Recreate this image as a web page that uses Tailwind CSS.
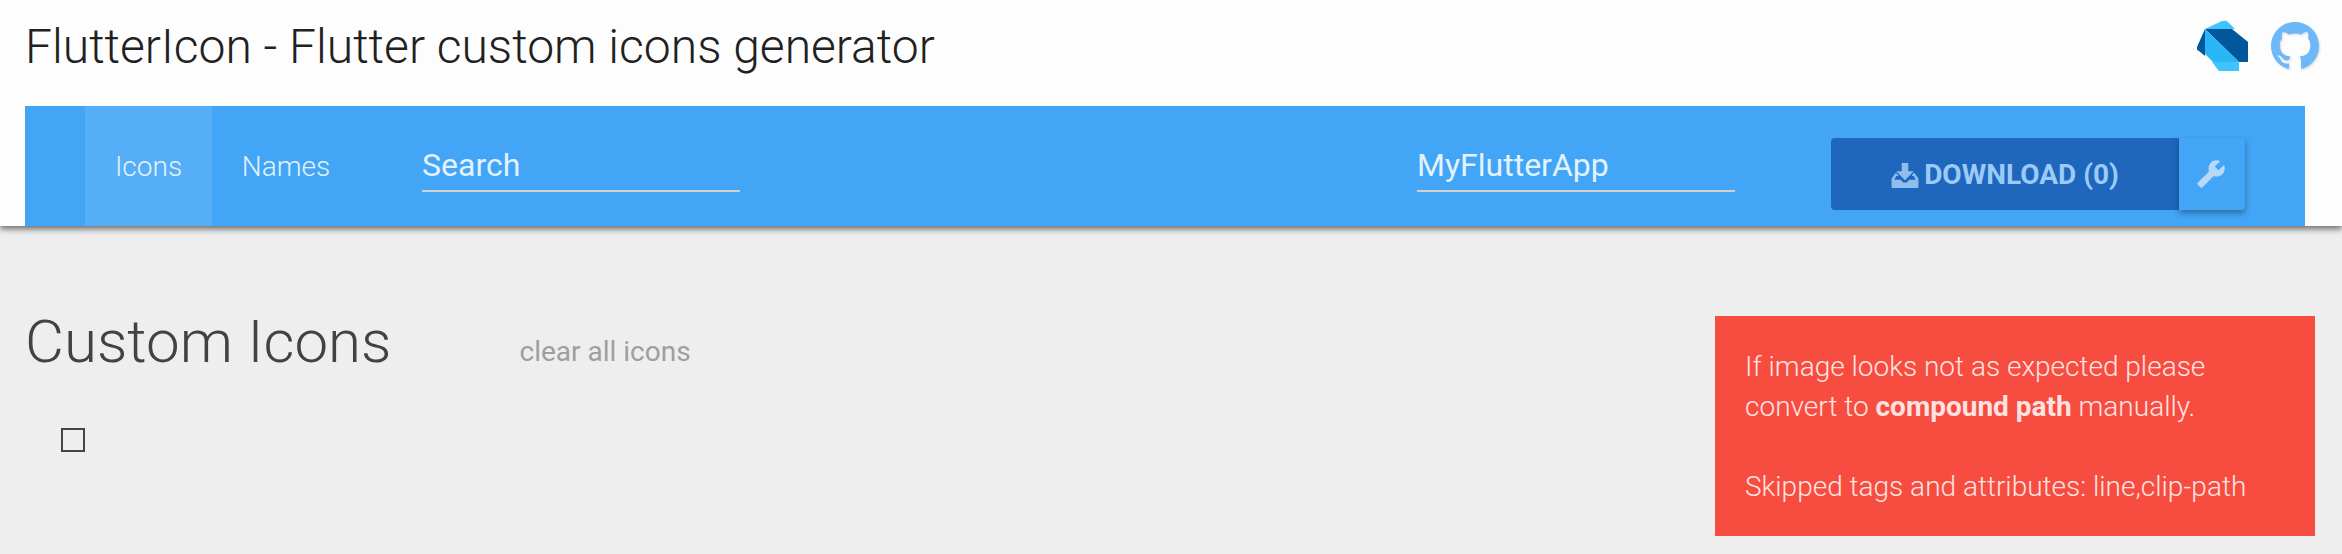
<!DOCTYPE html>
<html lang="en">
<head>
<meta charset="utf-8">
<title>FlutterIcon</title>
<script src="https://cdn.jsdelivr.net/npm/@tailwindcss/browser@4"></script>
</head>
<body class="bg-[#eeeeee] font-['Roboto',sans-serif] h-[554px] overflow-hidden">
<header class="bg-[#fdfdfd] shadow-[0_3px_6px_rgba(0,0,0,0.55)] relative">
  <div class="h-[106px] flex items-start justify-between pl-[25px] pr-[23px]">
    <h1 class="text-[48px] leading-[93px] font-light text-[#212121]">FlutterIcon - Flutter custom icons generator</h1>
    <div class="flex items-center gap-[23px] pt-[20px]">
      <svg class="w-[51px] h-[51px]" viewBox="0 0 51 51">
        <path d="M8 9 L25 1 Q29 0 31 2 L38 9 Z" fill="#40c4ff"/>
        <path d="M8 9 L35 9 L51 22 L51 42 L42 42 Z" fill="#01579b"/>
        <path d="M8 9 L42 42 L16 42 L8 34 Z" fill="#29b6f6"/>
        <path d="M8 9 L0 27 Q-1 30 2 31 L8 36 Z" fill="#01579b"/>
        <path d="M15 42 L42 42 L42 51 L22 51 Z" fill="#40c4ff"/>
      </svg>
      <svg class="w-[48px] h-[48px] drop-shadow-[1px_1px_1px_rgba(0,0,0,0.15)]" viewBox="0 0 16 16">
        <path fill="#6db8f8" fill-rule="evenodd" d="M8 0C3.58 0 0 3.58 0 8c0 3.54 2.29 6.53 5.47 7.59.4.07.55-.17.55-.38 0-.19-.01-.82-.01-1.49-2.01.37-2.53-.49-2.69-.94-.09-.23-.48-.94-.82-1.13-.28-.15-.68-.52-.01-.53.63-.01 1.08.58 1.23.82.72 1.21 1.87.87 2.33.66.07-.52.28-.87.51-1.07-1.78-.2-3.64-.89-3.64-3.95 0-.87.31-1.59.82-2.15-.08-.2-.36-1.02.08-2.12 0 0 .67-.21 2.2.82.64-.18 1.32-.27 2-.27.68 0 1.36.09 2 .27 1.53-1.04 2.2-.82 2.2-.82.44 1.1.16 1.92.08 2.12.51.56.82 1.27.82 2.15 0 3.07-1.87 3.75-3.65 3.95.29.25.54.73.54 1.48 0 1.07-.01 1.93-.01 2.2 0 .21.15.46.55.38A8.013 8.013 0 0016 8c0-4.42-3.58-8-8-8z"/>
      </svg>
    </div>
  </div>
  <nav class="ml-[25px] mr-[37px] h-[120px] bg-[#42a5f5] flex items-stretch pl-[60px]">
    <a class="w-[127px] pt-[2px] flex items-center justify-center bg-white/10 text-[28px] font-light text-[#e3f2fd]">Icons</a>
    <a class="w-[148px] pt-[2px] flex items-center justify-center text-[28px] font-light text-[#e3f2fd]">Names</a>
    <div class="ml-[62px] w-[318px] h-[86px] flex items-end border-b-2 border-[#d0d0d0] pb-[3px] text-[32px] leading-[44px] text-[#e3f2fd]">Search</div>
    <div class="ml-[677px] w-[318px] h-[86px] flex items-end border-b-2 border-[#d0d0d0] pb-[3px] text-[32px] leading-[44px] text-[#e3f2fd]">MyFlutterApp</div>
    <div class="ml-[96px] mt-[32px] h-[72px] flex">
      <div class="w-[348px] pt-[2px] bg-[#1f67bd] rounded-l-[4px] flex items-center justify-center gap-[5px] text-[28px] font-bold text-[#9ccaf6]">
        <svg class="w-[28px] h-[25px]" viewBox="0 0 29 27" fill="#8fbdec"><path d="M11 0h7v9h6l-9.500 9.500L5 9h6z"/><path d="M0 17l4-6h1.500l2 3H5l-2 4h7l2.500 3h4l2.500-3h7l-2-4h-2.500l2-3H25l4 6v9a1 1 0 0 1-1 1H1a1 1 0 0 1-1-1z"/></svg>
        <span>DOWNLOAD (0)</span>
      </div>
      <div class="w-[66px] pr-[2px] bg-[#42a5f5] rounded-r-[4px] shadow-[0_3px_6px_rgba(0,0,0,0.35)] flex items-center justify-center">
        <svg class="w-[30px] h-[30px] -scale-x-100" viewBox="0 0 24 24" fill="#b5daf9"><path d="M22.700 19l-9.100-9.100c.9-2.300.4-5-1.500-6.900-2-2-5-2.400-7.400-1.300L9 6 6 9 1.600 4.700C.4 7.100.9 10.100 2.900 12.100c1.900 1.900 4.600 2.400 6.900 1.500l9.100 9.100c.4.4 1 .4 1.400 0l2.300-2.300c.5-.4.5-1.100.1-1.400z"/></svg>
      </div>
    </div>
  </nav>
</header>
<main class="flex justify-between pl-[25px] pr-[27px] pt-[90px]">
  <div>
    <div class="flex items-baseline">
      <h2 class="text-[60px] leading-[52px] font-light text-[#424242]">Custom Icons</h2>
      <a class="ml-[128px] text-[28px] text-[#9e9e9e] -translate-y-[1px]">clear all icons</a>
    </div>
    <div class="ml-[36px] mt-[54px] w-[24px] h-[24px] border-2 border-[#444444]"></div>
  </div>
  <aside class="w-[600px] h-[220px] bg-[#f74d40] pt-[31px] px-[30px] pb-[29px] text-[28px] leading-[40px] font-light text-[#ffe3e1]">
    If image looks not as expected please<br>convert to <b class="font-bold">compound path</b> manually.<br><br>Skipped tags and attributes: line,clip-path
  </aside>
</main>
</body>
</html>
